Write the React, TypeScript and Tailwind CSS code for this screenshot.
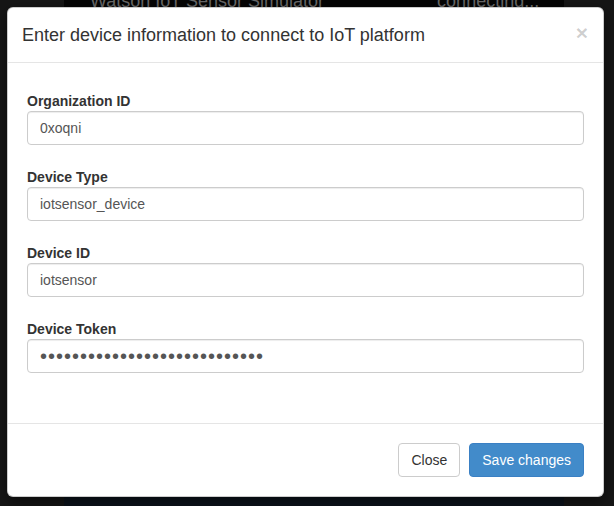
const fields = [
  { label: "Organization ID", value: "0xoqni" },
  { label: "Device Type", value: "iotsensor_device" },
  { label: "Device ID", value: "iotsensor" },
];

function Field({ label, value, dots }: { label: string; value: string; dots?: boolean }) {
  return (
    <div className="mb-[22px]">
      <label className="block text-[14px] leading-5 font-bold text-[#333]">{label}</label>
      <input
        readOnly
        value={value}
        className={
          dots
            ? "block w-full h-[34px] px-3 rounded-[4px] border border-[#ccc] bg-white text-[20px] tracking-[1px] text-[#555] shadow-[inset_0_1px_1px_rgba(0,0,0,0.075)] outline-none"
            : "block w-full h-[34px] px-3 rounded-[4px] border border-[#ccc] bg-white text-[14px] text-[#555] shadow-[inset_0_1px_1px_rgba(0,0,0,0.075)] outline-none"
        }
      />
    </div>
  );
}

export default function App() {
  return (
    <div className="relative w-[614px] h-[506px] overflow-hidden bg-[#161616] font-['Liberation_Sans',Arial,sans-serif]">
      {/* page behind the backdrop */}
      <div className="ml-[64px] w-[500px] h-full flex flex-col">
        <div className="h-[60px] bg-[#050505] flex gap-[113px] pl-[26px] -mt-[8px] text-[18px] leading-[18px] text-[#6a6a6a]">
          <span>Watson IoT Sensor Simulator</span>
          <span>connecting...</span>
        </div>
        <div className="flex-1 bg-[#0c131c]" />
      </div>

      {/* modal */}
      <div className="absolute left-[7px] top-[7px] w-[597px] h-[490px] flex flex-col bg-white border border-black/20 rounded-[6px] shadow-[0_5px_15px_rgba(0,0,0,0.5)]">
        <div className="flex items-start justify-between pl-[14px] pr-[15px] py-[15px] border-b border-[#e5e5e5]">
          <h4 className="text-[18px] leading-6 text-[#333]">
            Enter device information to connect to IoT platform
          </h4>
          <span className="text-[21px] leading-[21px] font-bold text-black/20 -mt-[1px]">×</span>
        </div>
        <div className="flex-1 pt-[28px] px-[19px]">
          {fields.map((f) => (
            <Field key={f.label} label={f.label} value={f.value} />
          ))}
          <Field label="Device Token" value={"•".repeat(28)} dots />
        </div>
        <div className="flex justify-end gap-[9px] pt-[19px] pb-[19px] pr-[19px] border-t border-[#e5e5e5]">
          <button className="h-[34px] px-3 rounded-[4px] border border-[#ccc] bg-white text-[14px] text-[#333]">
            Close
          </button>
          <button className="h-[34px] px-3 rounded-[4px] border border-[#3a80c4] bg-[#428bca] text-[14px] text-white">
            Save changes
          </button>
        </div>
      </div>
    </div>
  );
}
